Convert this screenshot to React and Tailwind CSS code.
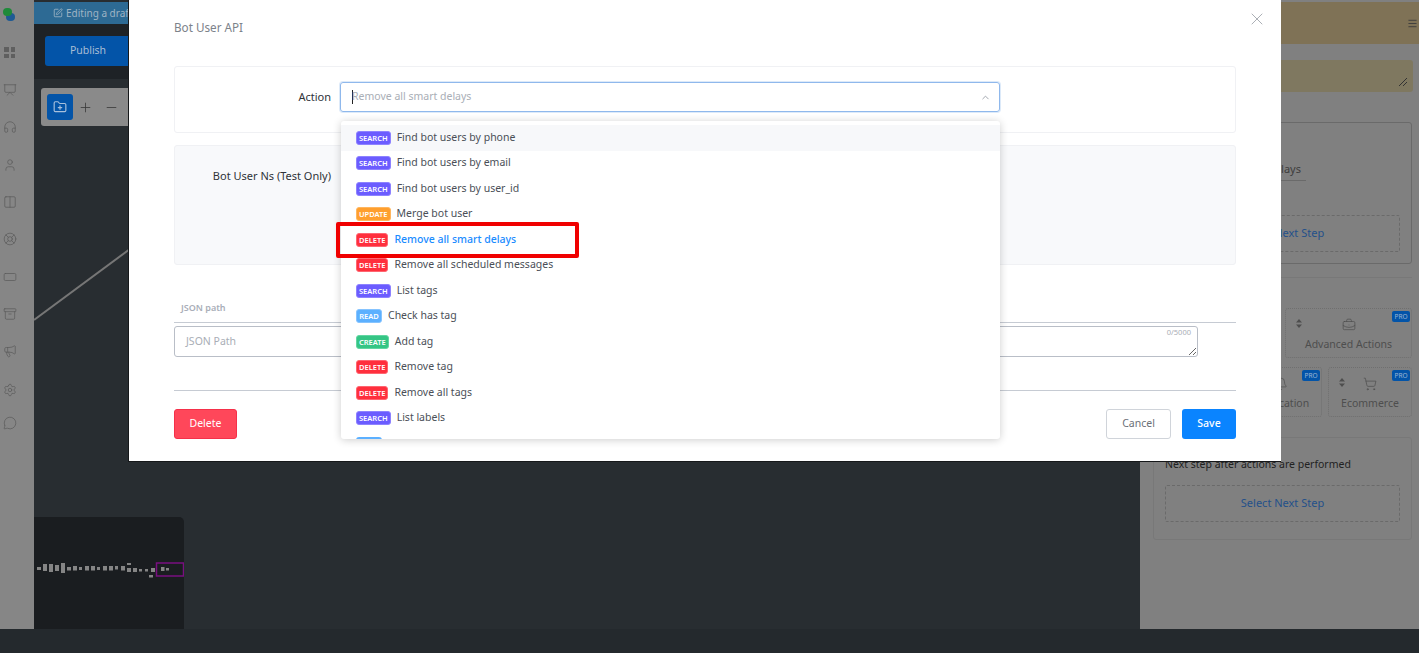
import React from 'react';
import {
  Presentation, Headphones, User, Columns2, LifeBuoy, RectangleHorizontal, Archive, Megaphone, Settings,
  MessageCircle, FolderPlus, Plus, Minus, X, ChevronUp, SquarePen, Menu, BriefcaseBusiness, Bell, ShoppingCart,
} from 'lucide-react';

const badgeColors = {
  SEARCH: 'bg-[#6b5cff] border-[#8d82ff]',
  UPDATE: 'bg-[#ff9f2e] border-[#ffb65f]',
  DELETE: 'bg-[#ff2f3d] border-[#ff6570]',
  READ: 'bg-[#5cb0ff] border-[#86c4ff]',
  CREATE: 'bg-[#35c585] border-[#62d6a2]',
};

const options = [
  ['SEARCH', 'Find bot users by phone'],
  ['SEARCH', 'Find bot users by email'],
  ['SEARCH', 'Find bot users by user_id'],
  ['UPDATE', 'Merge bot user'],
  ['DELETE', 'Remove all smart delays'],
  ['DELETE', 'Remove all scheduled messages'],
  ['SEARCH', 'List tags'],
  ['READ', 'Check has tag'],
  ['CREATE', 'Add tag'],
  ['DELETE', 'Remove tag'],
  ['DELETE', 'Remove all tags'],
  ['SEARCH', 'List labels'],
];

const sideIcons = [
  [Presentation, 'mt-[25px]'],
  [Headphones, 'mt-[23px]'],
  [User, 'mt-[24px]'],
  [Columns2, 'mt-[23px]'],
  [LifeBuoy, 'mt-[23px]'],
  [RectangleHorizontal, 'mt-[24px]'],
  [Archive, 'mt-[23px]'],
  [Megaphone, 'mt-[23px]'],
  [Settings, 'mt-[25px]'],
  [MessageCircle, 'mt-[19px]'],
];

const miniBlocks = [
  [37, 567, 4, 3], [43, 564, 4, 7], [49, 564, 4, 8], [55, 565, 4, 6], [61, 563, 4, 10], [67, 567, 4, 3.5],
  [73, 566, 4, 4.5], [79, 567, 3, 3], [85, 566, 4, 4.5], [91, 566, 4, 4.5], [97, 567, 3, 3], [103, 566, 4, 4.5],
  [109, 566, 4, 4.5], [115, 566, 3, 3.5], [121, 566, 4, 4.5], [127, 563, 4, 2], [127, 568, 4, 4], [133, 568, 4, 4],
  [139, 569, 3, 2.5], [145, 569, 3, 2.5], [151, 568, 4, 4], [149, 575, 4, 2.5], [161, 567, 3.5, 4], [166, 568, 3, 2.5],
];

function Sidebar() {
  return (
    <div className="w-[34px] shrink-0 bg-[#868686] flex flex-col pl-[3px] pt-[7px] text-[#5c5c5c]">
      <div className="relative w-[13px] h-[14px]">
        <div className="absolute left-[3px] top-[6px] w-[9px] h-[8px] rounded-full bg-[#1f5a94]" />
        <div className="absolute left-0 top-[1px] w-[9px] h-[8px] rounded-full bg-[#1f8a3a]" />
      </div>
      <div className="mt-[26px] grid grid-cols-2 gap-[2px] w-[11px] ml-px">
        <div className="w-[4.5px] h-[4.5px] bg-[#5f5f5f]" />
        <div className="w-[4.5px] h-[4.5px] bg-[#5f5f5f]" />
        <div className="w-[4.5px] h-[4.5px] bg-[#5f5f5f]" />
        <div className="w-[4.5px] h-[4.5px] bg-[#5f5f5f]" />
      </div>
      {sideIcons.map(([Icon, mt], i) => (
        <Icon key={i} size={14} strokeWidth={1.3} className={mt} />
      ))}
    </div>
  );
}

function Canvas() {
  return (
    <div className="flex-1 relative flex flex-col bg-[#282d31] pt-[2px]">
      <div className="h-[22px] bg-[#2d6a94] flex items-center pl-[19px] text-[10px] text-[#9fb4c4] gap-[3px]">
        <SquarePen size={10} /> Editing a draft
      </div>
      <div className="h-[55px] bg-[#1e2226] pl-[11px] pt-[12px]">
        <div className="w-[86px] h-[30px] rounded-[3px] bg-[#0354a8] flex items-center justify-center text-[10.5px] text-[#a8bdd4]">Publish</div>
      </div>
      <div className="ml-[7px] mt-[9px] w-[120px] h-[38px] rounded-[3px] bg-[#8a8a8a] flex items-center pl-[6px] gap-[5px] text-[#3a3a3a]">
        <div className="w-[26px] h-[26px] rounded-[3px] bg-[#0354a8] flex items-center justify-center text-[#a8c0dc]">
          <FolderPlus size={14} />
        </div>
        <Plus size={15} strokeWidth={1.3} />
        <Minus size={15} strokeWidth={1.3} className="ml-[6px]" />
      </div>
      <svg className="absolute left-0 top-0 pointer-events-none" width="120" height="340">
        <line x1="0" y1="320" x2="100" y2="246" stroke="#767676" strokeWidth="2" />
      </svg>
      <div className="absolute left-0 bottom-0 w-[150px] h-[112px] rounded-tr-[5px] bg-[#1a1d20]">
        <svg width="150" height="112" viewBox="34 517 150 112">
          {miniBlocks.map(([x, y, w, h], i) => (
            <rect key={i} x={x} y={y} width={w} height={h} fill="#858585" />
          ))}
          <rect x="156.5" y="563" width="27" height="13" fill="none" stroke="#7a0f80" strokeWidth="1.5" />
        </svg>
      </div>
    </div>
  );
}

function ProBadge() {
  return <span className="absolute right-[1px] top-[2px] h-[11px] w-[18px] rounded-[2px] bg-[#0354a8] text-[6.5px] leading-[11px] text-center text-[#9db6d4]">PRO</span>;
}

function SortArrows() {
  return (
    <svg className="absolute left-[10px] top-[10px]" width="6" height="9" viewBox="0 0 6 9" fill="currentColor">
      <path d="M3 0 6 3.5H0Z" />
      <path d="M3 9 0 5.5H6Z" />
    </svg>
  );
}

function ActionTile({ label, icon: Icon, className }) {
  return (
    <div className={`relative h-[50px] border border-dotted border-[#6f6f6f] rounded-[3px] flex flex-col items-center pt-[9px] text-[#4e4e4e] ${className}`}>
      <SortArrows />
      <ProBadge />
      <Icon size={14} strokeWidth={1.2} />
      <span className="text-[10.5px] mt-[5px]">{label}</span>
    </div>
  );
}

function RightPanel() {
  return (
    <div className="w-[279px] shrink-0 bg-[#808080] pt-[2px] flex flex-col">
      <div className="h-[42px] bg-[#7f7256] flex items-center justify-end pr-[1px] text-[#3c3c3c]">
        <Menu size={11} />
      </div>
      <div className="relative mt-[16px] w-[273px] h-[32px] rounded-[3px] bg-[#7f7860]">
        <svg className="absolute right-[5px] bottom-[5px]" width="10" height="10" stroke="#333" strokeWidth="1">
          <path d="M1 9 9 1M5 9 9 5" />
        </svg>
      </div>
      <div className="mt-[30px] ml-[13px] w-[259px] h-[142px] border border-[#6a6a6a] rounded-[3px] px-[11px] pt-[35px]">
        <div className="w-[141px] border-b border-[#6a6a6a] text-right text-[11px] leading-[22px] text-[#3d3d3d] pr-[5px]">Remove all smart delays</div>
        <div className="mt-[34px] h-[37px] border border-dashed border-[#6a6a6a] rounded-[2px] flex items-center justify-center text-[11px] text-[#24508a]">Select Next Step</div>
      </div>
      <div className="mt-[13px] ml-[13px] w-[259px] border-t border-[#787878] pt-[30px]">
        <div className="flex justify-end">
          <ActionTile label="Advanced Actions" icon={BriefcaseBusiness} className="w-[127px]" />
        </div>
        <div className="flex justify-end gap-[6px] mt-[9px]">
          <ActionTile label="Notification" icon={Bell} className="w-[83px]" />
          <ActionTile label="Ecommerce" icon={ShoppingCart} className="w-[84px]" />
        </div>
      </div>
      <div className="mt-[20px] ml-[13px] w-[259px] h-[103px] border border-[#787878] rounded-[3px] px-[11px] pt-[18px]">
        <div className="text-[10.5px] leading-[17px] text-[#222]">Next step after actions are performed</div>
        <div className="mt-[12px] h-[37px] border border-dashed border-[#6a6a6a] rounded-[2px] flex items-center justify-center text-[11px] text-[#24508a]">Select Next Step</div>
      </div>
    </div>
  );
}

function Dropdown() {
  return (
    <div className="absolute left-[212px] top-[121px] w-[659px] h-[318px] bg-white rounded-[3px] shadow-[0_1px_8px_rgba(0,0,0,0.2)] pt-[4px] overflow-hidden">
      {options.map(([kind, label], i) => (
        <div key={label} className={`h-[25.5px] flex items-center pl-[15px] gap-[6px] text-[10.5px] ${i === 0 ? 'bg-[#f7f8fa]' : ''} ${i === 4 ? 'text-[#1a8cff] font-medium' : 'text-[#4a4f57]'}`}>
          <span className={`h-[14px] px-[2px] min-w-[26px] rounded-[3px] border text-[7.5px] font-semibold leading-[12px] text-center text-white ${badgeColors[kind]}`}>{kind}</span>
          <span>{label}</span>
        </div>
      ))}
      <div className="ml-[15px] mt-[6px] w-[26px] h-[14px] rounded-[3px] bg-[#5cb0ff]" />
    </div>
  );
}

function Modal() {
  return (
    <div className="absolute left-[128px] top-0 w-[1153px] h-[462px] bg-white border-l border-b border-[#16181a] pl-[45px] pr-[45px] text-[10.5px]">
      <button className="absolute right-[14px] top-[9px] text-[#9a9fa6]"><X size={20} strokeWidth={1} /></button>
      <h2 className="pt-[18px] text-[11.7px] leading-[18px] text-[#7c828a]">Bot User API</h2>
      <div className="mt-[30px] w-[1062px] h-[67px] border border-[#f0f1f4] rounded-[3px] flex pt-[15px]">
        <label className="w-[156px] text-right text-[11px] leading-[30px] text-[#2f3338]">Action</label>
        <div className="ml-[9px] w-[660px] h-[30px] rounded-[3px] border border-[#8fb8ec] shadow-[0_0_0_1px_rgba(143,184,236,0.3)] flex items-center pl-[11px] pr-[8px] text-[#a9aeb6]">
          <span className="w-px h-[14px] bg-[#222] -mr-px" />
          <span className="flex-1">Remove all smart delays</span>
          <ChevronUp size={11} className="text-[#9aa0a8]" />
        </div>
      </div>
      <div className="mt-[12px] w-[1062px] h-[120px] border border-[#f0f1f4] bg-[#f8f9fb] rounded-[3px] pt-[22px]">
        <div className="w-[156px] text-right text-[11px] leading-[16px] text-[#2f3338]">Bot User Ns (Test Only)</div>
      </div>
      <div className="mt-[36px] w-[1062px] h-[22px] border-b border-[#c6cbd3] pl-[7px] text-[9px] font-semibold leading-[14px] text-[#a9aeb8]">JSON path</div>
      <div className="relative mt-[3px] w-[1024px] h-[31px]">
        <textarea placeholder="JSON Path" className="block w-full h-full border border-[#b9bec7] rounded-[3px] pl-[11px] pt-[6px] text-[10.5px] leading-[16px] outline-none placeholder:text-[#a9aeb6]" />
        <span className="absolute right-[7px] top-[1px] text-[7.5px] text-[#a9aeb6]">0/5000</span>
      </div>
      <div className="mt-[33px] w-[1062px] border-t border-[#c6cbd3] flex justify-between pt-[18px]">
        <button className="w-[63px] h-[30px] rounded-[3px] bg-[#ff475a] border border-[#f5304a] text-white text-[10.5px]">Delete</button>
        <div className="flex gap-[11px]">
          <button className="w-[65px] h-[30px] rounded-[3px] border border-[#d0d4da] text-[#6b7078] text-[10.5px]">Cancel</button>
          <button className="w-[54px] h-[30px] rounded-[3px] bg-[#0a84ff] text-white text-[10.5px] font-medium">Save</button>
        </div>
      </div>
      <Dropdown />
      <div className="absolute left-[207px] top-[222px] w-[243px] h-[36px] border-[4px] border-[#f00000] rounded-[2px]" />
    </div>
  );
}

export default function App() {
  return (
    <div className="relative w-[1419px] h-[653px] overflow-hidden flex flex-col bg-[#24292d] font-['Noto_Sans',sans-serif]">
      <div className="h-[629px] flex shrink-0">
        <Sidebar />
        <Canvas />
        <RightPanel />
      </div>
      <Modal />
    </div>
  );
}
